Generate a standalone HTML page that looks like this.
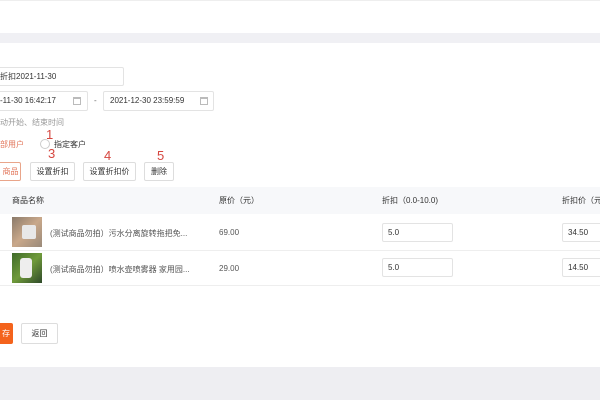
<!DOCTYPE html>
<html><head><meta charset="utf-8"><style>
*{margin:0;padding:0;box-sizing:border-box}
body{width:600px;height:400px;overflow:hidden;background:#fff;font-family:"Liberation Sans","Noto Sans CJK SC",sans-serif;font-size:8px;color:#333;position:relative}
.a{position:absolute;white-space:nowrap}
.box{position:absolute;border:1px solid #e3e3e3;background:#fff;border-radius:2px}
.btn{position:absolute;border:1px solid #ddd;border-radius:2px;background:#fff;text-align:center;font-size:8px;color:#333}
.red{color:#d6463f;font-size:13px}
.cal{position:absolute;width:8px;height:8px;border:1px solid #bbb;border-top-width:2px}
</style></head><body>
<div class="a" style="left:0;top:0;width:600px;height:1px;background:#eee"></div>
<div class="a" style="left:0;top:33px;width:600px;height:10px;background:#f0f0f4"></div>
<div class="box" style="left:-4px;top:67px;width:128px;height:19px"></div>
<div class="a" style="left:0;top:71px">折扣2021-11-30</div>
<div class="box" style="left:-4px;top:91px;width:92px;height:20px"></div>
<div class="a" style="left:0;top:96px">-11-30 16:42:17</div>
<div class="cal" style="left:73px;top:97px"></div>
<div class="a" style="left:94px;top:96px;color:#666">-</div>
<div class="box" style="left:103px;top:91px;width:111px;height:20px"></div>
<div class="a" style="left:110px;top:96px">2021-12-30 23:59:59</div>
<div class="cal" style="left:200px;top:97px"></div>
<div class="a" style="left:0;top:117px;color:#999">动开始、结束时间</div>
<div class="a" style="left:0;top:139px;color:#e2765a">部用户</div>
<div class="a" style="left:40px;top:139px;width:10px;height:10px;border:1px solid #ccc;border-radius:50%"></div>
<div class="a" style="left:54px;top:139px">指定客户</div>
<div class="a red" style="left:46px;top:127px">1</div>
<div class="a red" style="left:48px;top:146px">3</div>
<div class="a red" style="left:104px;top:148px">4</div>
<div class="a red" style="left:157px;top:148px">5</div>
<div class="btn" style="left:-4px;top:162px;width:25px;height:19px;border-color:#e9a58a;color:#e2765a;line-height:17px;padding-left:4px">商品</div>
<div class="btn" style="left:30px;top:162px;width:45px;height:19px;line-height:17px">设置折扣</div>
<div class="btn" style="left:83px;top:162px;width:53px;height:19px;line-height:17px">设置折扣价</div>
<div class="btn" style="left:144px;top:162px;width:30px;height:19px;line-height:17px">删除</div>
<div class="a" style="left:0;top:187px;width:600px;height:27px;background:#f7f8fa"></div>
<div class="a" style="left:12px;top:195px">商品名称</div>
<div class="a" style="left:219px;top:195px">原价（元）</div>
<div class="a" style="left:382px;top:195px">折扣（0.0-10.0)</div>
<div class="a" style="left:562px;top:195px">折扣价（元</div>
<div class="a" style="left:0;top:250px;width:600px;height:1px;background:#eee"></div>
<div class="a" style="left:0;top:285px;width:600px;height:1px;background:#eee"></div>
<div class="a" style="left:12px;top:217px;width:30px;height:30px;background:linear-gradient(135deg,#8a7a6a,#c9a88a 50%,#9a8a7a)"></div>
<div class="a" style="left:22px;top:225px;width:14px;height:14px;background:#e8e8e8;border-radius:2px"></div>
<div class="a" style="left:12px;top:253px;width:30px;height:30px;background:linear-gradient(135deg,#3f6a2a,#6f9a3a 50%,#2f4a2a)"></div>
<div class="a" style="left:20px;top:258px;width:12px;height:20px;background:#eee;border-radius:3px"></div>
<div class="a" style="left:50px;top:228px;color:#555">(测试商品勿拍）污水分离旋转拖把免...</div>
<div class="a" style="left:50px;top:264px;color:#555">(测试商品勿拍）喷水壶喷雾器 家用园...</div>
<div class="a" style="left:219px;top:228px;color:#555">69.00</div>
<div class="a" style="left:219px;top:264px;color:#555">29.00</div>
<div class="box" style="left:382px;top:223px;width:71px;height:19px"></div>
<div class="a" style="left:388px;top:228px">5.0</div>
<div class="box" style="left:382px;top:258px;width:71px;height:19px"></div>
<div class="a" style="left:388px;top:263px">5.0</div>
<div class="box" style="left:562px;top:223px;width:50px;height:19px"></div>
<div class="a" style="left:568px;top:228px">34.50</div>
<div class="box" style="left:562px;top:258px;width:50px;height:19px"></div>
<div class="a" style="left:568px;top:263px">14.50</div>
<div class="a" style="left:-4px;top:323px;width:17px;height:21px;background:#f4631c;border-radius:2px;color:#fff;line-height:21px;text-align:right;padding-right:3px">存</div>
<div class="btn" style="left:21px;top:323px;width:37px;height:21px;line-height:19px">返回</div>
<div class="a" style="left:0;top:367px;width:600px;height:33px;background:#eeeef2"></div>
</body></html>
